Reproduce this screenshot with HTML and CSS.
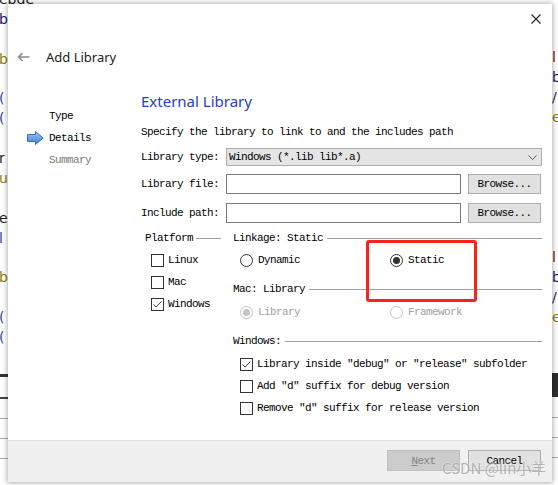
FILE: index.html
```html
<!DOCTYPE html>
<html lang="en">
<head>
<meta charset="utf-8">
<title>Add Library</title>
<link rel="stylesheet" href="styles.css">
</head>
<body>
<div class="desk">
  <div class="code code-left">
    <div class="ln c-dark">ebde</div>
    <div class="ln c-navy">b</div>
    <div class="ln"></div>
    <div class="ln c-olive">b</div>
    <div class="ln"></div>
    <div class="ln c-blue">(</div>
    <div class="ln c-blue">(</div>
    <div class="ln"></div>
    <div class="ln c-dark">r</div>
    <div class="ln c-olive">u</div>
    <div class="ln"></div>
    <div class="ln c-dark">e</div>
    <div class="ln c-blue">l</div>
    <div class="ln"></div>
    <div class="ln c-olive">b</div>
    <div class="ln"></div>
    <div class="ln c-blue">(</div>
    <div class="ln c-blue">(</div>
  </div>
  <div class="code code-right">
    <div class="ln c-red">l</div>
    <div class="ln c-navy">b</div>
    <div class="ln c-navy">/</div>
    <div class="ln c-olive">e</div>
    <div class="ln"></div>
    <div class="ln"></div>
    <div class="ln"></div>
    <div class="ln"></div>
    <div class="ln"></div>
    <div class="ln"></div>
    <div class="ln c-red">l</div>
    <div class="ln c-navy">b</div>
    <div class="ln c-navy">/</div>
    <div class="ln c-olive">e</div>
  </div>
  <div class="tail tail-left">
    <div class="thick"></div>
    <div class="dark"></div>
    <div class="thin"></div>
    <div class="thin"></div>
    <div class="thin"></div>
  </div>
  <div class="tail tail-right">
    <div class="block"></div>
    <div class="thin"></div>
    <div class="thin"></div>
    <div class="thin"></div>
  </div>

  <div class="dialog">
    <div class="titlebar">
      <svg class="close" width="10" height="10" viewBox="0 0 10 10"><path d="M0.5 0.5L9.5 9.5M9.5 0.5L0.5 9.5" stroke="#222" stroke-width="1.1" fill="none"/></svg>
    </div>
    <div class="header">
      <svg class="back" width="13" height="10" viewBox="0 0 13 10"><path d="M12.5 5H1.5M5.5 1L1.5 5L5.5 9" stroke="#8a8a8a" stroke-width="1.6" fill="none"/></svg>
      <span class="title">Add Library</span>
    </div>
    <div class="main">
      <ul class="nav">
        <li class="nav-item"><span class="nav-icon"></span>Type</li>
        <li class="nav-item"><span class="nav-icon"><svg width="17" height="14" viewBox="0 0 17 14"><defs><linearGradient id="ga" x1="0" y1="0" x2="0" y2="1"><stop offset="0" stop-color="#9cc8f7"/><stop offset="1" stop-color="#3d7ddb"/></linearGradient></defs><path d="M0.5 3.5H8.5V0.5L16.2 7L8.5 13.5V10.5H0.5Z" fill="url(#ga)" stroke="#3a6cc0"/></svg></span>Details</li>
        <li class="nav-item muted"><span class="nav-icon"></span>Summary</li>
      </ul>
      <div class="content">
        <h1 class="heading">External Library</h1>
        <p class="intro">Specify the library to link to and the includes path</p>
        <div class="form-row">
          <span class="label">Library type:</span>
          <div class="combo"><span>Windows (*.lib lib*.a)</span><svg width="9" height="5" viewBox="0 0 9 5"><path d="M0.5 0.5L4.5 4.5L8.5 0.5" stroke="#555" fill="none"/></svg></div>
        </div>
        <div class="form-row">
          <span class="label">Library file:</span>
          <div class="field"></div>
          <button class="browse">Browse...</button>
        </div>
        <div class="form-row row-gap">
          <span class="label">Include path:</span>
          <div class="field"></div>
          <button class="browse">Browse...</button>
        </div>
        <div class="options">
          <div class="platform">
            <div class="group-title">Platform</div>
            <div class="check"><span class="box"></span>Linux</div>
            <div class="check"><span class="box"></span>Mac</div>
            <div class="check"><span class="box"><svg width="11" height="11" viewBox="0 0 11 11"><path d="M1.5 5.5L4 8L9.5 2.5" stroke="#444" fill="none"/></svg></span>Windows</div>
          </div>
          <div class="settings">
            <div class="group-title">Linkage: Static</div>
            <div class="radio-row">
              <div class="radio"><span class="dot"></span>Dynamic</div>
              <div class="radio checked"><span class="dot"></span>Static</div>
            </div>
            <div class="group-title spaced">Mac: Library</div>
            <div class="radio-row disabled">
              <div class="radio checked"><span class="dot"></span>Library</div>
              <div class="radio"><span class="dot"></span>Framework</div>
            </div>
            <div class="group-title spaced">Windows:</div>
            <div class="win-checks">
              <div class="check"><span class="box"><svg width="11" height="11" viewBox="0 0 11 11"><path d="M1.5 5.5L4 8L9.5 2.5" stroke="#444" fill="none"/></svg></span>Library inside "debug" or "release" subfolder</div>
              <div class="check"><span class="box"></span>Add "d" suffix for debug version</div>
              <div class="check"><span class="box"></span>Remove "d" suffix for release version</div>
            </div>
          </div>
        </div>
      </div>
    </div>
    <div class="footer">
      <button class="btn btn-disabled"><u>N</u>ext</button>
      <button class="btn">Cancel</button>
    </div>
  </div>

  <div class="highlight"></div>
  <div class="watermark">CSDN @lin小羊</div>
</div>
</body>
</html>
```

FILE: styles.css
```css
* { box-sizing: border-box; }
html, body { margin: 0; padding: 0; }
body { width: 558px; height: 485px; overflow: hidden; background: #fff; }

.desk { position: relative; width: 558px; height: 485px; overflow: hidden; background: #fff; }

/* background editor fragments */
.code { position: absolute; font: 14px/19.9px "DejaVu Sans", sans-serif; }
.code .ln { height: 19.9px; white-space: pre; }
.code-left { left: -1px; top: -10px; }
.code-right { left: 552px; top: 47px; line-height: 20px; }
.code-right .ln { height: 20px; }
.c-dark { color: #1e1e1e; }
.c-navy { color: #1a1a6a; }
.c-blue { color: #2a3fa0; }
.c-olive { color: #8a7f10; }
.c-red { color: #8a1010; }

.tail { position: absolute; }
.tail-left { left: 0; top: 374px; width: 8px; }
.tail-left .thick { height: 3px; background: #333; }
.tail-left .dark { height: 2px; background: #444; margin-top: 20px; }
.tail-left .thin, .tail-right .thin { height: 1px; background: #a8a8a8; margin-top: 19px; }
.tail-right { left: 552px; top: 373px; width: 6px; }
.tail-right .block { height: 24px; background: #2f2f2f; }
.tail-right .block + .thin { margin-top: 20px; }

/* dialog window */
.dialog {
  position: absolute; left: 8px; top: 4px; width: 544px; height: 478px;
  background: #fff; box-shadow: 0 0 5px 1px rgba(0, 0, 0, 0.3);
  display: flex; flex-direction: column;
  font: 11px/16px "Liberation Mono", monospace; letter-spacing: -0.6px; color: #000;
}
.titlebar { height: 30px; flex: none; display: flex; justify-content: flex-end; align-items: center; padding-right: 11px; }
.close { display: block; }
.header { height: 46px; flex: none; display: flex; align-items: center; gap: 16px; padding-left: 9px; }
.back { display: block; }
.title { font: 13px/18px "Noto Sans", sans-serif; letter-spacing: 0; color: #1b1b1b; }

.main { flex: 1; display: flex; }
.nav { list-style: none; margin: 0; padding: 25px 0 0 19px; width: 133px; flex: none; }
.nav-item { display: flex; align-items: center; height: 22px; }
.nav-item.muted { color: #7a7a7a; }
.nav-icon { width: 22px; display: flex; align-items: center; }
.nav-icon svg { display: block; }

.content { width: 401px; display: flex; flex-direction: column; }
.heading { margin: 10px 0 0; font: 400 15px/22px "Noto Sans", sans-serif; letter-spacing: 0; color: #1f40c8; }
.intro { margin: 12px 0 0; }

.form-row { display: flex; align-items: center; margin-top: 8px; }
.form-row.row-gap { margin-top: 9px; }
.label { width: 85px; flex: none; }
.combo {
  flex: 1; height: 18px; background: #e5e5e5; border: 1px solid #adadad;
  display: flex; align-items: center; justify-content: space-between; padding: 0 4px 0 2px;
}
.combo svg { display: block; }
.field { width: 235px; height: 20px; border: 1px solid #7a7a7a; background: #fff; }
.browse {
  margin-left: 7px; width: 73px; height: 20px; padding: 0;
  background: #e1e1e1; border: 1px solid #adadad;
  font: inherit; letter-spacing: inherit; color: #000;
}

.options { display: grid; grid-template-columns: 81px 1fr; column-gap: 11px; margin-top: 8px; }
.group-title { display: flex; align-items: center; gap: 4px; height: 14px; line-height: 14px; white-space: nowrap; }
.group-title::after { content: ""; flex: 1; height: 1px; background: #a0a0a0; }
.platform .group-title { padding-left: 4px; gap: 3px; }
.platform .group-title::after { margin-right: 1px; }
.group-title.spaced { margin-top: 11px; }

.check { display: flex; align-items: center; gap: 4px; height: 22px; white-space: nowrap; }
.platform .group-title + .check { margin-top: 4px; }
.platform .check { padding-left: 10px; }
.box { width: 13px; height: 13px; flex: none; border: 1px solid #333; background: #fff; display: flex; align-items: center; justify-content: center; }
.box svg { display: block; }

.radio-row { display: grid; grid-template-columns: 150px 1fr; padding-left: 7px; margin-top: 4px; height: 22px; }
.radio-row + .group-title.spaced { margin-top: 11px; }
.radio-row.disabled { margin-top: 5px; }
.radio { display: flex; align-items: center; gap: 5px; white-space: nowrap; }
.dot { width: 13px; height: 13px; flex: none; border: 1px solid #333; border-radius: 50%; background: #fff; display: flex; align-items: center; justify-content: center; }
.radio.checked .dot::after { content: ""; width: 7px; height: 7px; border-radius: 50%; background: #333; }
.radio-row.disabled .radio { color: #a0a0a0; }
.radio-row.disabled .dot { border-color: #c4c4c4; }
.radio-row.disabled .radio.checked .dot::after { background: #c4c4c4; }

.win-checks { padding-left: 7px; margin-top: 5px; }

.footer {
  height: 42px; flex: none; background: #f0f0f0; border-top: 1px solid #dfdfdf;
  display: flex; justify-content: flex-end; align-items: flex-start; gap: 8px; padding: 9px 11px 0 0;
}
.btn {
  width: 73px; height: 21px; padding: 0; background: #e1e1e1; border: 1px solid #adadad;
  font: inherit; letter-spacing: inherit; color: #000;
}
.btn-disabled { background: #cccccc; border-color: #bfbfbf; color: #838383; }

/* annotation overlays */
.highlight { position: absolute; left: 366px; top: 240px; width: 111px; height: 62px; border: 3px solid #f5251b; border-radius: 3px; }
.watermark {
  position: absolute; left: 442px; top: 458px;
  font: 15px/20px "Noto Sans CJK SC", sans-serif; color: rgba(140, 140, 140, 0.65);
  text-shadow: 0 0 2px #fff;
}
```
